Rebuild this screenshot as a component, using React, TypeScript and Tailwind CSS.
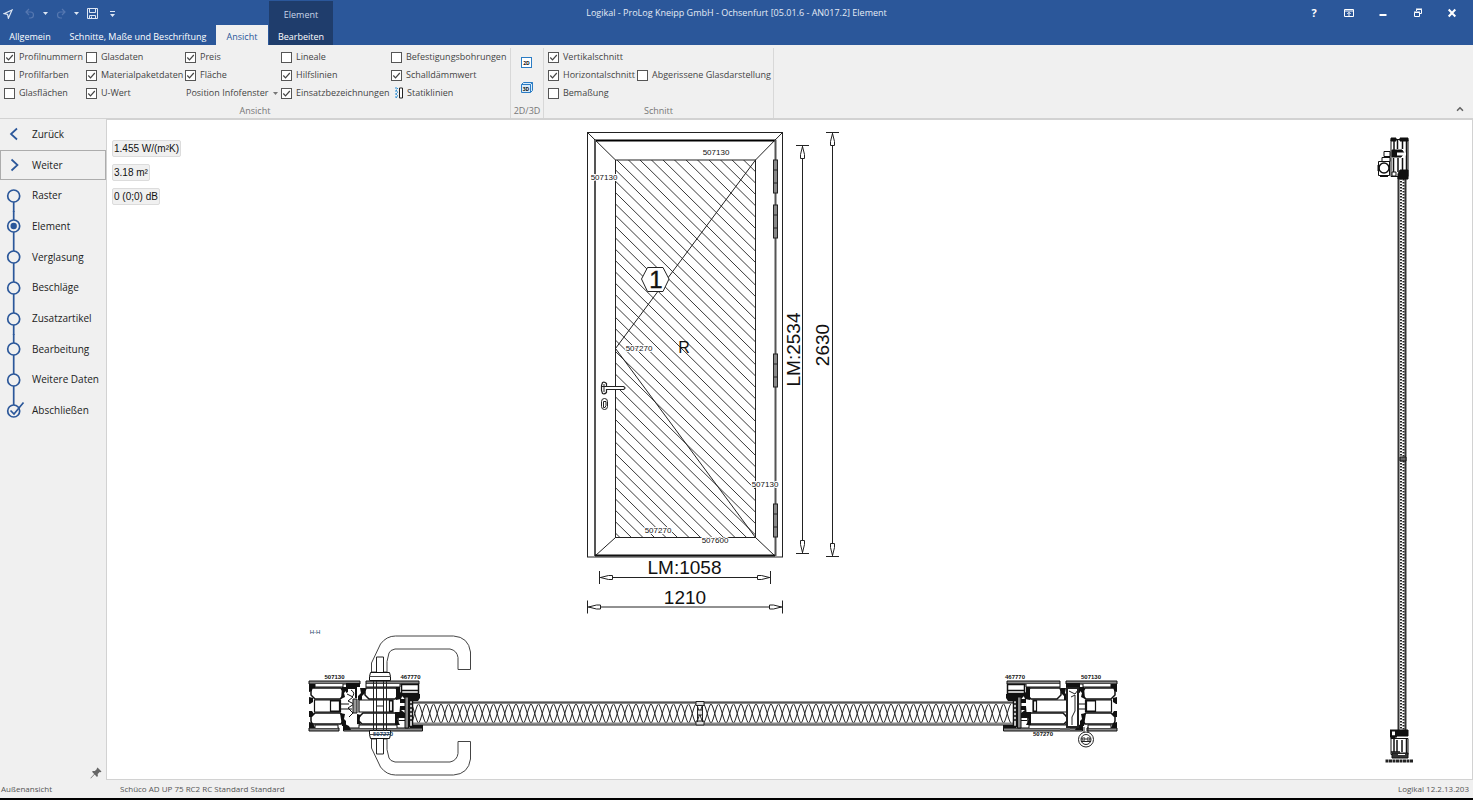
import React, { useState } from "react";
import { ChevronUp } from "lucide-react";

type CheckOption = { label: string; checked?: boolean };

const steps = [
  "Raster",
  "Element",
  "Verglasung",
  "Beschläge",
  "Zusatzartikel",
  "Bearbeitung",
  "Weitere Daten",
  "Abschließen",
];

const Check = ({ label, checked }: CheckOption) => (
  <label className="relative flex h-[18px] items-center gap-1 whitespace-nowrap">
    <input
      type="checkbox"
      defaultChecked={checked}
      className="peer h-[11px] w-[11px] shrink-0 appearance-none border border-[#555] bg-white"
    />
    <svg
      viewBox="0 0 11 11"
      className="pointer-events-none invisible absolute left-0 h-[11px] w-[11px] peer-checked:visible"
      fill="none"
      stroke="#444"
      strokeWidth="1.2"
    >
      <path d="M2.3 5.5l2.2 2.3L8.8 3" />
    </svg>
    <span>{label}</span>
  </label>
);

const Caret = ({ className = "" }) => (
  <svg viewBox="0 0 5 3" className={`h-[3px] w-[5px] ${className}`}>
    <path d="M0 0h5L2.5 3z" fill="currentColor" />
  </svg>
);

const QuickAccess = () => (
  <div className="flex h-[25px] items-center pt-[2px] pl-[3px] text-[#dde6f3]">
    <button aria-label="Senden" className="w-[10px]">
      <svg viewBox="0 0 10 10" className="h-[10px] w-[10px]" fill="none" stroke="currentColor" strokeWidth="1.2">
        <path d="M9 1L1 4.7l3.6.8.8 3.7z" />
      </svg>
    </button>
    <button aria-label="Rückgängig" className="ml-3 text-[#5577b0]">
      <svg viewBox="0 0 10 11" className="h-[11px] w-[10px]" fill="none" stroke="currentColor" strokeWidth="1.2">
        <path d="M4 1L1 4l3 3M1 4h4.5a3 3 0 0 1 0 6H4" />
      </svg>
    </button>
    <button aria-label="Rückgängig Liste" className="ml-2">
      <Caret />
    </button>
    <button aria-label="Wiederholen" className="ml-2 text-[#5577b0]">
      <svg viewBox="0 0 10 11" className="h-[11px] w-[10px]" fill="none" stroke="currentColor" strokeWidth="1.2">
        <path d="M6 1l3 3-3 3M9 4H4.5a3 3 0 0 0 0 6H6" />
      </svg>
    </button>
    <button aria-label="Wiederholen Liste" className="ml-2">
      <Caret />
    </button>
    <button aria-label="Speichern" className="ml-2">
      <svg viewBox="0 0 11 11" className="h-[11px] w-[11px]" fill="none" stroke="currentColor">
        <path d="M.5.5h10v10H.5zM2.5.5v4h6v-4M2.5 10.5v-3h6v3M4.5 8.5v2" />
      </svg>
    </button>
    <button aria-label="Anpassen" className="ml-3">
      <svg viewBox="0 0 5 6" className="h-[6px] w-[5px]" fill="currentColor">
        <path d="M0 0h5v1H0zM0 3h5L2.5 6z" />
      </svg>
    </button>
  </div>
);

const WindowButtons = () => (
  <div className="mt-[7px] mr-[15px] flex w-[150px] justify-between justify-self-end text-white">
    <button aria-label="Hilfe" className="h-3 w-3 text-[11px] leading-3 font-bold">
      ?
    </button>
    <button aria-label="Menüband" className="h-3 w-3">
      <svg viewBox="0 0 12 12" fill="none" stroke="currentColor">
        <path d="M1.5 2.5h9v7h-9zM1 4h10M6 9V5.5M4.3 7L6 5.3 7.7 7" />
      </svg>
    </button>
    <button aria-label="Minimieren" className="h-3 w-3">
      <svg viewBox="0 0 12 12" fill="currentColor">
        <path d="M2.5 7h7v2h-7z" />
      </svg>
    </button>
    <button aria-label="Verkleinern" className="h-3 w-3">
      <svg viewBox="0 0 12 12" fill="none" stroke="currentColor">
        <path d="M2.5 5.5h5v4h-5zM2 5h6M4.5 4V2.5h5v4H8M4 2h6" />
      </svg>
    </button>
    <button aria-label="Schließen" className="h-3 w-3">
      <svg viewBox="0 0 12 12" fill="none" stroke="currentColor" strokeWidth="2">
        <path d="M2.7 2.5l6.6 7M9.3 2.5l-6.6 7" />
      </svg>
    </button>
  </div>
);

const Header = () => (
  <header className="grid h-[45px] grid-cols-[1fr_auto_1fr] bg-[#2b579a] text-[9px] text-white">
    <div className="flex">
      <div>
        <QuickAccess />
        <nav className="flex h-5 whitespace-nowrap">
          <button className="w-[60px] pt-[3px]">Allgemein</button>
          <button className="w-[156px] pt-[3px]">Schnitte, Maße und Beschriftung</button>
          <button className="w-[52px] bg-[#f0f0f0] pt-[3px] text-[#2b579a]">Ansicht</button>
        </nav>
      </div>
      <div className="mt-px ml-px flex h-11 w-16 flex-col bg-[#1f3d6c] text-center">
        <span className="h-6 pt-2 leading-3 text-[#c9d5e8]">Element</span>
        <button className="h-5 pt-[3px]">Bearbeiten</button>
      </div>
    </div>
    <h1 className="pt-[7px] leading-3 whitespace-nowrap text-[#e4ebf5]">
      Logikal - ProLog Kneipp GmbH - Ochsenfurt [05.01.6 - AN017.2] Element
    </h1>
    <WindowButtons />
  </header>
);

const Ribbon = () => (
  <div className="flex h-[74px] border-b border-[#d2d2d2] bg-[#f0f0f0] pt-[3px] text-[9px] text-[#444]">
    <section className="flex w-[511px] flex-col border-r border-[#d8d8d8]">
      <div className="flex pl-1">
        <div className="w-[82px]">
          <Check label="Profilnummern" checked />
          <Check label="Profilfarben" />
          <Check label="Glasflächen" />
        </div>
        <div className="w-[99px]">
          <Check label="Glasdaten" />
          <Check label="Materialpaketdaten" checked />
          <Check label="U-Wert" checked />
        </div>
        <div className="w-[96px]">
          <Check label="Preis" checked />
          <Check label="Fläche" checked />
          <button className="flex h-[18px] w-[93px] items-center justify-between pl-px whitespace-nowrap">
            Position Infofenster
            <Caret className="text-[#777]" />
          </button>
        </div>
        <div className="w-[110px]">
          <Check label="Lineale" />
          <Check label="Hilfslinien" checked />
          <Check label="Einsatzbezeichnungen" checked />
        </div>
        <div>
          <Check label="Befestigungsbohrungen" />
          <Check label="Schalldämmwert" checked />
          <button className="flex h-[18px] items-center gap-1 pl-1">
            <svg viewBox="0 0 8 12" className="h-3 w-2" fill="none">
              <path d="M1 0v12M3 1L1 3l2 2-2 2 2 2-2 2" stroke="#2b8fd6" strokeDasharray="2 1" />
              <path d="M4.5 1h3v10h-3z" stroke="#222" fill="#fff" />
            </svg>
            Statiklinien
          </button>
        </div>
      </div>
      <h2 className="h-4 text-center leading-[18px] text-[#777]">Ansicht</h2>
    </section>
    <section className="flex w-[33px] flex-col border-r border-[#d8d8d8]">
      <div className="flex h-[54px] flex-col items-center gap-[13px] pt-[9px]">
        <button aria-label="2D Ansicht">
          <svg viewBox="0 0 12 12" className="h-3 w-3">
            <rect x=".5" y=".5" width="10" height="10" fill="#fff" stroke="#2b7cc4" />
            <text x="5.5" y="7.5" fontSize="5" fontWeight="700" textAnchor="middle" fill="#111">2D</text>
          </svg>
        </button>
        <button aria-label="3D Ansicht">
          <svg viewBox="0 0 12 12" className="h-3 w-3">
            <path d="M.5 2.5l2-2h9v8l-2 2h-9z" fill="#d9ebf9" stroke="#2b7cc4" />
            <path d="M.5 2.5h9v8M9.5 2.5l2-2" fill="none" stroke="#2b7cc4" />
            <text x="5" y="8.5" fontSize="5" fontWeight="700" textAnchor="middle" fill="#111">3D</text>
          </svg>
        </button>
      </div>
      <h2 className="h-4 text-center leading-[18px] text-[#777]">2D/3D</h2>
    </section>
    <section className="flex w-[230px] flex-col border-r border-[#d8d8d8]">
      <div className="flex items-center pl-1">
        <div className="w-[89px]">
          <Check label="Vertikalschnitt" checked />
          <Check label="Horizontalschnitt" checked />
          <Check label="Bemaßung" />
        </div>
        <Check label="Abgerissene Glasdarstellung" />
      </div>
      <h2 className="h-4 text-center leading-[18px] text-[#777]">Schnitt</h2>
    </section>
    <button aria-label="Menüband reduzieren" className="mt-auto mr-2 mb-1 ml-auto text-[#666]">
      <ChevronUp className="h-[10px] w-[10px]" strokeWidth={4} />
    </button>
  </div>
);

const StepIcon = ({ index, active }: { index: number; active: boolean }) => {
  const last = index === steps.length - 1;
  return (
    <svg viewBox="0 0 28 30" className="h-[30px] w-7 overflow-visible" fill="none" stroke="#2b579a" strokeWidth="1.7">
      {index > 0 && <path d="M13.7 0V9" />}
      {!last && <path d="M13.7 21V31" />}
      <circle cx="13.7" cy="15" r="6" />
      {active && <circle cx="13.7" cy="15" r="3.2" fill="#2b579a" stroke="none" />}
      {last && <path d="M10.5 14.5l3.5 3.5L23.5 6.5" />}
    </svg>
  );
};

const Sidebar = () => {
  const [current, setCurrent] = useState(1);

  return (
    <aside className="flex w-[106px] shrink-0 flex-col justify-between bg-[#f0f0f0] text-[10px] text-[#222]">
      <nav className="flex h-[307px] flex-col whitespace-nowrap">
        <button
          className="flex min-h-0 flex-1 items-center"
          onClick={() => setCurrent(Math.max(0, current - 1))}
        >
          <svg viewBox="0 0 32 14" className="h-[14px] w-8" fill="none" stroke="#2b579a" strokeWidth="1.7">
            <path d="M17 1.5L11 7l6 5.5" />
          </svg>
          Zurück
        </button>
        <button
          className="flex min-h-0 flex-1 items-center outline -outline-offset-1 outline-[#acacac]"
          onClick={() => setCurrent(Math.min(steps.length - 1, current + 1))}
        >
          <svg viewBox="0 0 32 14" className="h-[14px] w-8" fill="none" stroke="#2b579a" strokeWidth="1.7">
            <path d="M11.5 1.5l6 5.5-6 5.5" />
          </svg>
          Weiter
        </button>
        {steps.map((step, index) => (
          <button
            key={step}
            className="flex min-h-0 flex-1 items-center gap-1"
            onClick={() => setCurrent(index)}
          >
            <StepIcon index={index} active={index === current} />
            {step}
          </button>
        ))}
      </nav>
      <button aria-label="Anheften" className="mr-1 mb-px self-end text-[#666]">
        <svg viewBox="0 0 12 12" className="h-3 w-3" fill="currentColor">
          <path d="M7.5.5l4 4-1 .7-.8-.1-2 2 .2 2-.9.9-2.4-2.4L.8 11.4l-.3-.3L4.2 7 2 4.8l.9-.9 2 .2 2-2-.1-.8z" />
        </svg>
      </button>
    </aside>
  );
};

const DimensionLine = ({ length }: { length: number }) => (
  <g fill="#fff" stroke="#222">
    <path d={`M0 -6.5V6.5M${length} -6.5V6.5M0 0H${length}`} />
    <path d="M1 0L9 -2H13V2H9Z" />
    <path d={`M${length - 1} 0l-8 -2h-4v4h4z`} />
  </g>
);

const hatch = Array.from({ length: 47 }, (_, i) => 10.5 + i * 11.35);
const hinges = [160, 205, 354, 504];
const profileLabels = [
  { x: 716, y: 155, text: "507130" },
  { x: 604, y: 180, text: "507130" },
  { x: 639, y: 351, text: "507270" },
  { x: 765, y: 487, text: "507130" },
  { x: 658, y: 533, text: "507270" },
  { x: 715, y: 543, text: "507600" },
];

const Door = () => (
  <g fill="none" stroke="#222">
    <rect x="587.5" y="132.5" width="195" height="424.5" />
    <path d="M587.5 132.5l28 27.5M782.5 132.5l-27 27.5M595 556l20.5-18.5M775 556l-19.5-18.5" />
    <path d="M594 140.5H776" stroke="#000" strokeWidth="2" />
    <path d="M595 140V556M775.5 140V556" stroke="#555" strokeWidth="2" />
    <path d="M595 555.5H775" stroke="#111" strokeWidth="2" />
    <clipPath id="pane">
      <rect x="615" y="160" width="141" height="378" />
    </clipPath>
    <g clipPath="url(#pane)" strokeWidth=".9">
      {hatch.map((y) => (
        <path key={y} d={`M615 ${y}l141 139`} />
      ))}
    </g>
    <rect x="615.5" y="160" width="140" height="377.5" />
    <path d="M755.5 160L615.5 348.5L755.5 537.5" />
    {hinges.map((y) => (
      <g key={y} fill="#888">
        <rect x="773.5" y={y} width="4" height="33" />
        <path d={`M773.5 ${y + 10}h4M773.5 ${y + 23}h4`} />
      </g>
    ))}
    <path d="M647.5 267.5h15.5l6 11.5-6 12.5h-15.5l-6-12.5z" fill="#fff" />
    <path d="M602.5 382.5q2-1 4 1v3h17q3 1.5 0 3h-17v3q-2 2-4 1l-1-3v-5z" fill="#fff" strokeWidth="1.2" />
    <path d="M601.5 386.5h5M604 384v8" />
    <rect x="601.5" y="398.5" width="6" height="11" rx="3" fill="#fff" />
    <path d="M603.5 401.5h2.5v4l-1 2h-1.5z" />
    <g fill="#111" stroke="none" textAnchor="middle">
      <text x="656" y="287.5" fontSize="24" stroke="#111" strokeWidth=".4">1</text>
      <text x="684" y="353" fontSize="16">R</text>
      <g fontSize="8" stroke="#fff" strokeWidth="2" paintOrder="stroke">
        {profileLabels.map((label) => (
          <text key={`${label.x}-${label.y}`} x={label.x} y={label.y}>
            {label.text}
          </text>
        ))}
      </g>
    </g>
  </g>
);

const Dimensions = () => (
  <>
    <g transform="translate(599.5 577.5)">
      <DimensionLine length={171} />
    </g>
    <g transform="translate(587.5 607)">
      <DimensionLine length={195} />
    </g>
    <g transform="translate(802.5 145.5) rotate(90)">
      <DimensionLine length={408} />
    </g>
    <g transform="translate(832.5 132.5) rotate(90)">
      <DimensionLine length={424} />
    </g>
    <g fontSize="19" textAnchor="middle" fill="#111">
      <text x="684.5" y="574">LM:1058</text>
      <text x="685" y="604">1210</text>
      <text transform="translate(800 349.5) rotate(-90)">LM:2534</text>
      <text transform="translate(829 345) rotate(-90)">2630</text>
    </g>
  </>
);

// frame and sash profile, handle side; the hinge side reuses it mirrored
const ProfilePair = () => (
  <g fill="#fff" stroke="#111">
    <path d="M309 681h51v3h-51zM309 728h30v3h-30zM366 681h53v3h-53zM343.5 728h79v3h-79z" fill="#888" />
    <path d="M315 684v3h28v-3M315 728v-3h23v3M366 684v3h34v-3M359 728v-3h38v3" />
    <path d="M312 688h29l2 3v5l-3 3h-25l-4-4v-4zM312 724h29l2-3v-5l-3-3h-25l-4 4v4z" strokeWidth="1.5" />
    <path d="M314.5 700h26v12h-26zM330.5 701h9v10h-9z" strokeWidth="1.2" />
    <path d="M366 688h30l2 3v5l-3 3h-26l-4-4v-4zM362 724h34l2-3v-5l-3-3h-32l-4 4v4z" strokeWidth="1.5" />
    <path d="M359 700h34v12h-34zM389.5 701h3v10h-3z" strokeWidth="1.2" />
    <g fill="#111" stroke="none">
      <path d="M309 684h6v4h-3v3l-3 1zM309 697l4 1v4l-3 2h-1zM309 711h3l2 3-3 3h-2zM309 722l4 1 2 5h-6z" />
      <path d="M342 687h4v4l-2 2 1 4-4 2zM340 713l5 1-1 5 2 2v5h-4zM396 687h4v5l3 2-2 5-5 1zM395 712h5v5l-3 2 3 6h-5z" />
      <path d="M346 683h14v4h-3v11h-2v-9h-7v3l-2 1zM360 688h5v5l-3 3v4h-4v-4l3-3zM357 714l4 1-2 5 2 5-4-1z" />
      <path d="M400 694h20v4l-2 3h-6v2h-12v-4h5zM400 706h5v4h-4l4 3v5h-6zM410 725h13v3h-13zM343 723l6 3 2 4h-8z" />
    </g>
    <path d="M403 696.5h4M411 696.5h6M402 701h3" />
    <path d="M347 694l6 3-5 4 6 3-6 4 5 5-4 4M351 690q5 3 1 7M340 704h9M340 709h12" fill="none" />
    <path d="M353 699h4v14h-4z" fill="#999" />
    <path d="M401.5 684.5h17v9h-17zM402 690.5h16" strokeWidth="1.5" />
    <path d="M405 697h3.5v31H405z" fill="#888" />
    <path d="M409.5 700.5h3v26h-3zM409 704h3M409 708h3M409 712h3M409 716h3M409 720h3" strokeWidth="1.5" />
    <path d="M399 714.5h6M399 720.5h6" />
  </g>
);

const Lever = () => (
  <g fill="#fff" stroke="#444">
    <path d="M371.5 672v-9l9-19q6-8 15-8h58q15 1 17 16v17.5h-12.5v-12q-1-7-8-8.5h-55q-5 1-6 4l-2 8.5v10.5z" />
    <path d="M376.5 657h7v16h-7z" stroke="#222" />
    <path d="M370.5 672.5h19l1 4v4h-21v-4z" stroke="#111" />
    <path d="M369.5 676.5h21" />
  </g>
);

// insulation wave between the two panel skins
const wave = (from: number, to: number) =>
  `M411 ${from}` +
  Array.from({ length: 80 }, (_, i) => {
    const x = 411 + i * 7.5;
    const [a, b] = i % 2 === 0 ? [from, to] : [to, from];
    return `C${x + 2} ${a} ${x + 5.5} ${b} ${x + 7.5} ${b}`;
  }).join("");

const HorizontalSection = () => (
  <g fill="none" stroke="#222">
    <path d={wave(704, 723)} />
    <path d={wave(723, 704)} />
    <path d="M411 703H1015M411 723.5H1015" stroke="#888" strokeWidth="2" />
    <path d="M411 702H1015M411 725H1015" />
    <path d="M696 701.5h8v4h-8zM696 721h8v4h-8zM697.5 710h5v5h-5zM697.5 705v17M702.5 705v17" fill="#ddd" />
    <ProfilePair />
    <g transform="matrix(-1 0 0 1 1426 0)">
      <ProfilePair />
    </g>
    <path d="M1067 688h11v39h-11z" fill="#fff" strokeWidth="2" />
    <path d="M1071 697l4-2v16l-3 6v8M1069 691l6 3 3-4" />
    <path d="M1060 729.5h10" stroke="#666" strokeWidth="3" />
    <Lever />
    <g transform="matrix(1 0 0 -1 0 1411)">
      <Lever />
    </g>
    <path d="M373.5 681v50M376.5 681v50M383.5 681v50M386.5 681v50M376 706h8" />
    <path d="M1084 727v6M1088 727v6" />
    <circle cx="1086" cy="739.5" r="7.5" fill="#fff" />
    <circle cx="1086" cy="739.5" r="5" />
    <path d="M1082 738h3v2h-3zM1087 738h3v2h-3zM1081 741.5h10" />
    <g fontSize="6" fontWeight="700" fill="#111" stroke="none" textAnchor="middle">
      <text x="334.5" y="679">507130</text>
      <text x="410.5" y="679">467770</text>
      <text x="383" y="736" fill="#1c3f66">507270</text>
      <text x="1015" y="679">467770</text>
      <text x="1091" y="679">507130</text>
      <text x="1043" y="736">507270</text>
      <text x="315" y="634" fontWeight="400" fill="#1c3f66">H-H</text>
    </g>
  </g>
);

const VerticalSection = () => (
  <g fill="#fff" stroke="#111">
    <path d="M1398.5 176v556M1405.5 176v556" stroke="#333" strokeWidth="2" />
    <path d="M1401 178V732" stroke="#222" strokeWidth="2" strokeDasharray="1.5 1.5" />
    <path d="M1403.5 179V732" stroke="#222" strokeWidth="2" strokeDasharray="1.5 1.5" />
    <path d="M1391 139.5h17v37h-17z" />
    <path d="M1394 139v14M1397.5 139v10M1402.5 139v10M1406.5 139v38M1393.5 158v18M1398 158v14M1402.5 158v14" strokeWidth="1.5" />
    <path d="M1391 138h5v3h-5zM1400 138h8v3h-8zM1392 150h10l2 3-3 4h-9zM1400 170h8v9h-10v-5z" fill="#111" />
    <path d="M1397 152.5h9v3h-9z" stroke="none" />
    <path d="M1384 151.5h6v5h-6zM1382 157.5h8v4h-8zM1378.5 161.5h11v14h-11zM1392 172h4v4h-4z" />
    <circle cx="1384" cy="168" r="5" strokeWidth="1.5" />
    <path d="M1380 176h8M1378.5 165v6" strokeWidth="2" />
    <path d="M1400 457h6v4h-6z" fill="#666" />
    <path d="M1391 730.5h5v6h-5z" strokeWidth="2" />
    <path d="M1397 730h11v6h-13v3h-4v-3h6z" fill="#111" />
    <path d="M1391 738.5h17v16h-17z" />
    <path d="M1394 738v14M1397 740v12M1402 740v12M1406.5 738v18M1391 752h9" strokeWidth="1.5" />
    <path d="M1392 753h16v5h-16z" fill="#333" />
    <path d="M1398 754.5h7" stroke="#fff" />
    <path d="M1385.5 761h28" stroke="#222" strokeWidth="3" strokeDasharray="3 .5" />
  </g>
);

const Drawing = () => (
  <main className="relative min-w-0 flex-1 border border-[#d2d2d2] bg-white font-['Liberation_Sans',sans-serif]">
    <svg viewBox="107 120 1365 659" className="absolute inset-0 h-full w-full">
      <Door />
      <Dimensions />
      <HorizontalSection />
      <VerticalSection />
    </svg>
    <div className="absolute top-5 left-[5px] flex flex-col items-start gap-[7px] text-[10px] leading-[15px] text-[#111]">
      {["1.455 W/(m²K)", "3.18 m²", "0 (0;0) dB"].map((value) => (
        <span key={value} className="rounded-xs border border-[#dcdcdc] bg-[#f0f0f0] px-px">
          {value}
        </span>
      ))}
    </div>
  </main>
);

const StatusBar = () => (
  <footer className="border-b-2 border-black bg-[#f0f0f0] text-[8px] text-[#555]">
    <div className="flex h-[18px] items-center px-px">
      <span className="w-[119px]">Außenansicht</span>
      <span>Schüco AD UP 75 RC2 RC Standard Standard</span>
      <span className="mr-[3px] ml-auto">Logikal 12.2.13.203</span>
    </div>
  </footer>
);

const App = () => (
  <div className="flex min-h-screen flex-col bg-[#f0f0f0] font-['Open_Sans',sans-serif]">
    <Header />
    <Ribbon />
    <div className="flex flex-1">
      <Sidebar />
      <Drawing />
    </div>
    <StatusBar />
  </div>
);

export default App;
